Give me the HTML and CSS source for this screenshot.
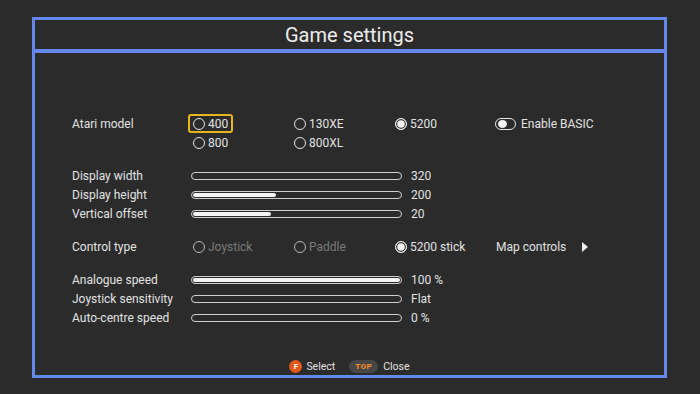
FILE: index.html
```html
<!DOCTYPE html>
<html lang="en">
<head>
    <meta charset="UTF-8">
    <title>Game settings</title>
    <link rel="stylesheet" href="styles.css">
</head>
<body>
    <div class="frame">
        <div class="title">Game settings</div>
        <div class="panel">
            <div class="group">
                <div class="row">
                    <span class="label">Atari model</span>
                    <span class="option focused"><i class="radio"></i>400</span>
                    <span class="option"><i class="radio"></i>130XE</span>
                    <span class="option"><i class="radio on"></i>5200</span>
                    <span class="option"><i class="toggle"></i>Enable BASIC</span>
                </div>
                <div class="row">
                    <span class="label"></span>
                    <span class="option"><i class="radio"></i>800</span>
                    <span class="option"><i class="radio"></i>800XL</span>
                </div>
            </div>

            <div class="group">
                <div class="slider-row">
                    <span class="label">Display width</span>
                    <div class="slider"><div class="fill" style="width: 0%"></div></div>
                    <span class="value">320</span>
                </div>
                <div class="slider-row">
                    <span class="label">Display height</span>
                    <div class="slider"><div class="fill" style="width: 40%"></div></div>
                    <span class="value">200</span>
                </div>
                <div class="slider-row">
                    <span class="label">Vertical offset</span>
                    <div class="slider"><div class="fill" style="width: 37.5%"></div></div>
                    <span class="value">20</span>
                </div>
            </div>

            <div class="group">
                <div class="row">
                    <span class="label">Control type</span>
                    <span class="option disabled"><i class="radio"></i>Joystick</span>
                    <span class="option disabled"><i class="radio"></i>Paddle</span>
                    <span class="option"><i class="radio on"></i>5200 stick</span>
                    <span class="option link">Map controls <i class="arrow"></i></span>
                </div>
            </div>

            <div class="group">
                <div class="slider-row">
                    <span class="label">Analogue speed</span>
                    <div class="slider"><div class="fill" style="width: 100%"></div></div>
                    <span class="value">100 %</span>
                </div>
                <div class="slider-row">
                    <span class="label">Joystick sensitivity</span>
                    <div class="slider"><div class="fill" style="width: 0%"></div></div>
                    <span class="value">Flat</span>
                </div>
                <div class="slider-row">
                    <span class="label">Auto-centre speed</span>
                    <div class="slider"><div class="fill" style="width: 0%"></div></div>
                    <span class="value">0 %</span>
                </div>
            </div>

            <div class="footer">
                <span class="hint"><i class="btn-f">F</i>Select</span>
                <span class="hint"><i class="btn-top">TOP</i>Close</span>
            </div>
        </div>
    </div>
</body>
</html>
```

FILE: styles.css
```css
body {
    margin: 0;
    width: 700px;
    height: 394px;
    box-sizing: border-box;
    padding: 17px 33px 16px 32px;
    background-color: #2b2b2b;
    font-family: Roboto, "Liberation Sans", sans-serif;
    font-size: 12px;
    color: #e2e2e2;
}
.frame {
    display: flex;
    flex-direction: column;
    height: 100%;
}
.title {
    height: 34px;
    box-sizing: border-box;
    border: 3px solid #6489ea;
    border-bottom-width: 2px;
    display: flex;
    align-items: center;
    justify-content: center;
    font-size: 20px;
    color: #ededed;
    padding-top: 1px;
}
.panel {
    flex: 1;
    border: 3px solid #6489ea;
    border-top-width: 2px;
    padding: 61px 0 0 37px;
    display: flex;
    flex-direction: column;
}
.group + .group {
    margin-top: 14px;
}
.row {
    display: grid;
    grid-template-columns: 116px repeat(4, 101px);
    height: 19px;
    align-items: center;
}
.option {
    display: flex;
    align-items: center;
    gap: 3px;
    height: 19px;
    box-sizing: border-box;
    border: 2px solid transparent;
    border-radius: 3px;
    padding: 0 3px;
    width: max-content;
}
.option.focused {
    border-color: #e9b51f;
}
.option.disabled {
    color: #7a7a7a;
}
.option.disabled .radio {
    border-color: #b8b8b8;
}
.radio {
    width: 12px;
    height: 12px;
    box-sizing: border-box;
    border: 1px solid #e6e6e6;
    border-radius: 50%;
}
.radio.on {
    border: 1.5px solid #f2f2f2;
    background-color: #f2f2f2;
    box-shadow: inset 0 0 0 1.2px #2b2b2b;
}
.toggle {
    width: 21px;
    height: 12px;
    box-sizing: border-box;
    border: 1px solid #e6e6e6;
    border-radius: 6px;
    padding: 0 2px;
    margin: 0 2px 0 -1px;
    display: flex;
    align-items: center;
}
.toggle::before {
    content: "";
    width: 9px;
    height: 8px;
    border-radius: 50%;
    background-color: #f2f2f2;
}
.link {
    gap: 0;
}
.arrow {
    width: 0;
    height: 0;
    border-top: 5px solid transparent;
    border-bottom: 5px solid transparent;
    border-left: 6px solid #f0f0f0;
    margin-left: 16px;
}
.slider-row {
    display: grid;
    grid-template-columns: 119px 211px auto;
    height: 19px;
    align-items: center;
}
.slider {
    height: 8px;
    box-sizing: border-box;
    border: 1px solid #d0d0d0;
    border-radius: 4px;
    padding: 1px;
}
.fill {
    height: 100%;
    background-color: #f4f4f4;
    border-radius: 2px;
}
.value {
    margin-left: 9px;
}
.footer {
    margin-top: auto;
    margin-left: -37px;
    height: 18px;
    display: flex;
    align-items: center;
    justify-content: center;
    gap: 14px;
}
.hint {
    display: flex;
    align-items: center;
    gap: 4px;
    font-size: 10.5px;
}
.btn-f {
    width: 13px;
    height: 13px;
    border-radius: 50%;
    background-color: #e2581a;
    color: #fff;
    font-style: normal;
    font-weight: bold;
    font-size: 8px;
    display: flex;
    align-items: center;
    justify-content: center;
}
.btn-top {
    width: 29px;
    height: 13px;
    border-radius: 7px;
    background-color: #474747;
    color: #f08a2a;
    font-style: normal;
    font-weight: 900;
    font-size: 8px;
    letter-spacing: 0.5px;
    display: flex;
    align-items: center;
    justify-content: center;
    margin-right: 1px;
}
```
